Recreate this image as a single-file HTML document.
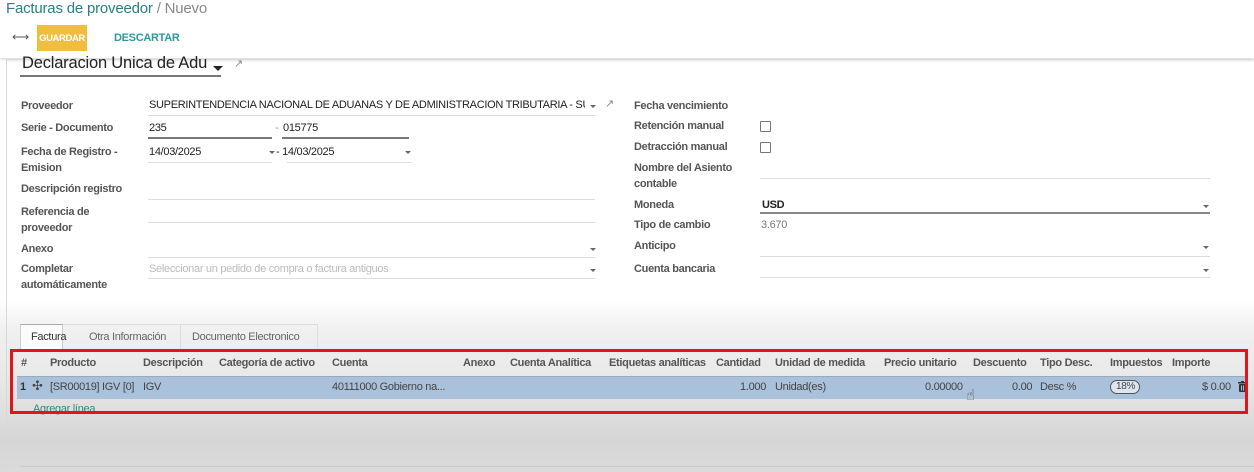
<!DOCTYPE html>
<html><head><meta charset="utf-8"><style>
*{margin:0;padding:0;box-sizing:border-box}
body{width:1254px;height:472px;overflow:hidden;position:relative;font-family:"Liberation Sans",sans-serif;font-size:11px;color:#444;
background:linear-gradient(#fff 0px,#fff 300px,#f0f0f0 330px,#e8e8e8 380px,#d6d6d6 440px,#dadada 472px)}
.a{position:absolute;white-space:nowrap;letter-spacing:-0.3px}
.l{font-weight:bold;color:#555;line-height:16px}
.ln{position:absolute;height:1px;background:#ddd}
.ln2{position:absolute;height:2px;background:#777}
.car{position:absolute;width:0;height:0;border-left:3px solid transparent;border-right:3px solid transparent;border-top:3px solid #666}
.cb{position:absolute;width:11px;height:11px;border:1px solid #777;background:#fff;border-radius:1px}
.h{font-weight:bold;color:#555}
</style></head><body>
<div style="position:absolute;left:0;top:0;width:1254px;height:58px;background:#fff;box-shadow:0 1px 3px rgba(0,0,0,.2)"></div>
<div style="position:absolute;left:6px;top:59px;width:1px;height:413px;background:#d8d8d8"></div>
<div class="a" style="left:6px;top:0px;font-size:15px;color:#2a7f80;letter-spacing:-0.2px">Facturas de proveedor <span style="color:#888">/ Nuevo</span></div>
<div class="a" style="left:12px;top:30px;font-size:12px;color:#555">⟷</div>
<div style="position:absolute;left:37px;top:25px;width:50px;height:26px;background:#f0be3c"></div>
<div class="a" style="left:37px;width:50px;text-align:center;top:33px;color:#fff;font-weight:bold;font-size:9.5px;letter-spacing:-0.4px">GUARDAR</div>
<div class="a" style="left:114px;top:32px;color:#2b9a9a;font-weight:bold;font-size:11px">DESCARTAR</div>
<div style="position:absolute;left:7px;top:59px;width:1247px;height:4px;background:linear-gradient(rgba(0,0,0,.08),rgba(0,0,0,0))"></div>
<div class="a" style="left:22px;top:54px;font-size:16.5px;color:#222;letter-spacing:-0.2px">Declaracion Unica de Adu</div>
<div class="car" style="left:213px;top:66px;border-width:5px 5px 0 5px;border-top-color:#222"></div>
<div class="a" style="left:234px;top:57px;font-size:11px;color:#888">↗</div>
<div class="ln2" style="left:20px;top:75px;width:201px"></div>

<div class="a l" style="left:21px;top:98px">Proveedor</div>
<div class="a l" style="left:21px;top:120px">Serie - Documento</div>
<div class="a l" style="left:21px;top:144px">Fecha de Registro -<br>Emision</div>
<div class="a l" style="left:21px;top:181px">Descripción registro</div>
<div class="a l" style="left:21px;top:204px">Referencia de<br>proveedor</div>
<div class="a l" style="left:21px;top:241px">Anexo</div>
<div class="a l" style="left:21px;top:261px">Completar<br>automáticamente</div>

<div class="a" style="left:149px;top:99px;color:#222;width:436px;overflow:hidden">SUPERINTENDENCIA NACIONAL DE ADUANAS Y DE ADMINISTRACION TRIBUTARIA - SUNAT</div>
<div class="car" style="left:590px;top:105px"></div>
<div class="a" style="left:605px;top:97px;color:#888">↗</div>
<div class="ln" style="left:148px;top:115px;width:447px"></div>
<div class="a" style="left:149px;top:122px;color:#222">235</div>
<div class="ln2" style="left:148px;top:137px;width:124px"></div>
<div class="a" style="left:275px;top:122px;color:#999">-</div>
<div class="a" style="left:283px;top:122px;color:#222">015775</div>
<div class="ln2" style="left:282px;top:137px;width:127px"></div>
<div class="a" style="left:149px;top:146px;color:#222">14/03/2025</div>
<div class="car" style="left:269px;top:151px"></div>
<div class="ln" style="left:148px;top:162px;width:124px"></div>
<div class="a" style="left:276px;top:146px;color:#222">- 14/03/2025</div>
<div class="car" style="left:405px;top:151px"></div>
<div class="ln" style="left:287px;top:162px;width:124px"></div>
<div class="ln" style="left:148px;top:199px;width:447px"></div>
<div class="ln" style="left:148px;top:222px;width:447px"></div>
<div class="car" style="left:590px;top:248px"></div>
<div class="ln" style="left:148px;top:257px;width:447px"></div>
<div class="a" style="left:149px;top:263px;color:#bbb">Seleccionar un pedido de compra o factura antiguos</div>
<div class="car" style="left:590px;top:269px"></div>
<div class="ln" style="left:148px;top:278px;width:447px"></div>

<div class="a l" style="left:634px;top:98px">Fecha vencimiento</div>
<div class="a l" style="left:634px;top:118px">Retención manual</div>
<div class="a l" style="left:634px;top:139px">Detracción manual</div>
<div class="a l" style="left:634px;top:160px">Nombre del Asiento<br>contable</div>
<div class="a l" style="left:634px;top:197px">Moneda</div>
<div class="a l" style="left:634px;top:217px">Tipo de cambio</div>
<div class="a l" style="left:634px;top:238px">Anticipo</div>
<div class="a l" style="left:634px;top:261px">Cuenta bancaria</div>
<div class="cb" style="left:760px;top:121px"></div>
<div class="cb" style="left:760px;top:142px"></div>
<div class="ln" style="left:760px;top:178px;width:450px"></div>
<div class="a" style="left:762px;top:199px;color:#222;font-weight:bold">USD</div>
<div class="car" style="left:1203px;top:205px"></div>
<div class="ln2" style="left:760px;top:212px;width:450px;background:#888"></div>
<div class="a" style="left:761px;top:219px;color:#777">3.670</div>
<div class="car" style="left:1203px;top:246px"></div>
<div class="ln" style="left:760px;top:256px;width:450px"></div>
<div class="car" style="left:1203px;top:269px"></div>
<div class="ln" style="left:760px;top:277px;width:450px"></div>

<div style="position:absolute;left:20px;top:324px;width:43px;height:26px;border:1px solid #ccc;border-bottom:none;background:#fbfbfb;border-top:1px solid #aaa"></div>
<div style="position:absolute;left:63px;top:324px;width:118px;height:25px;border-top:1px solid #ddd;border-right:1px solid #ddd"></div>
<div style="position:absolute;left:181px;top:324px;width:137px;height:25px;border-top:1px solid #ddd;border-right:1px solid #ddd"></div>
<div class="a" style="left:31px;top:331px;color:#333">Factura</div>
<div class="a" style="left:89px;top:331px;color:#666">Otra Información</div>
<div class="a" style="left:192px;top:331px;color:#666">Documento Electronico</div>

<div style="position:absolute;left:17px;top:376px;width:1228px;height:23px;background:#a9c1da;border-top:1px solid #9ab"></div>
<div class="a" style="left:33px;top:403px;color:#2b8a7a">Agregar línea</div>
<div class="a h" style="left:21px;top:357px">#</div>
<div class="a h" style="left:50px;top:357px">Producto</div>
<div class="a h" style="left:143px;top:357px">Descripción</div>
<div class="a h" style="left:219px;top:357px">Categoría de activo</div>
<div class="a h" style="left:332px;top:357px">Cuenta</div>
<div class="a h" style="left:463px;top:357px">Anexo</div>
<div class="a h" style="left:510px;top:357px">Cuenta Analítica</div>
<div class="a h" style="left:609px;top:357px">Etiquetas analíticas</div>
<div class="a h" style="left:716px;top:357px">Cantidad</div>
<div class="a h" style="left:775px;top:357px">Unidad de medida</div>
<div class="a h" style="left:884px;top:357px">Precio unitario</div>
<div class="a h" style="left:973px;top:357px">Descuento</div>
<div class="a h" style="left:1040px;top:357px">Tipo Desc.</div>
<div class="a h" style="left:1110px;top:357px">Impuestos</div>
<div class="a h" style="left:1172px;top:357px">Importe</div>

<div class="a" style="left:20px;top:381px;color:#333;font-weight:bold">1</div>
<div class="a" style="left:32px;top:378px;color:#444;font-size:13px">✣</div>
<div class="a" style="left:50px;top:381px;color:#444">[SR00019] IGV [0]</div>
<div class="a" style="left:143px;top:381px;color:#444">IGV</div>
<div class="a" style="left:332px;top:381px;color:#444">40111000 Gobierno na...</div>
<div class="a" style="left:740px;top:381px;color:#444">1.000</div>
<div class="a" style="left:775px;top:381px;color:#444">Unidad(es)</div>
<div class="a" style="left:925px;top:381px;color:#444">0.00000</div>
<div class="a" style="left:1012px;top:381px;color:#444">0.00</div>
<div class="a" style="left:1040px;top:381px;color:#444">Desc %</div>
<div style="position:absolute;left:1110px;top:380px;width:30px;height:14px;border:1.5px solid #555;border-radius:8px;background:#dde6ee"></div>
<div class="a" style="left:1116px;top:381px;color:#444;font-size:10px">18%</div>
<div class="a" style="left:1202px;top:381px;color:#444">$ 0.00</div>
<svg style="position:absolute;left:1238px;top:381px" width="9" height="11" viewBox="0 0 9 11"><rect x="0" y="1" width="9" height="1.5" fill="#333"/><rect x="3" y="0" width="3" height="1.5" fill="#333"/><rect x="1" y="3" width="7" height="8" rx="1" fill="#333"/><rect x="3" y="4.5" width="1" height="5" fill="#a9c1da"/><rect x="5" y="4.5" width="1" height="5" fill="#a9c1da"/></svg>
<div class="a" style="left:966px;top:386px;font-size:15px;color:#555;font-family:'DejaVu Sans',sans-serif">☝︎</div>

<div style="position:absolute;left:10px;top:349px;width:1238px;height:65px;border:3px solid #e3141c"></div>
<div style="position:absolute;left:20px;top:466px;width:1234px;height:1px;background:#ccc"></div>
</body></html>
